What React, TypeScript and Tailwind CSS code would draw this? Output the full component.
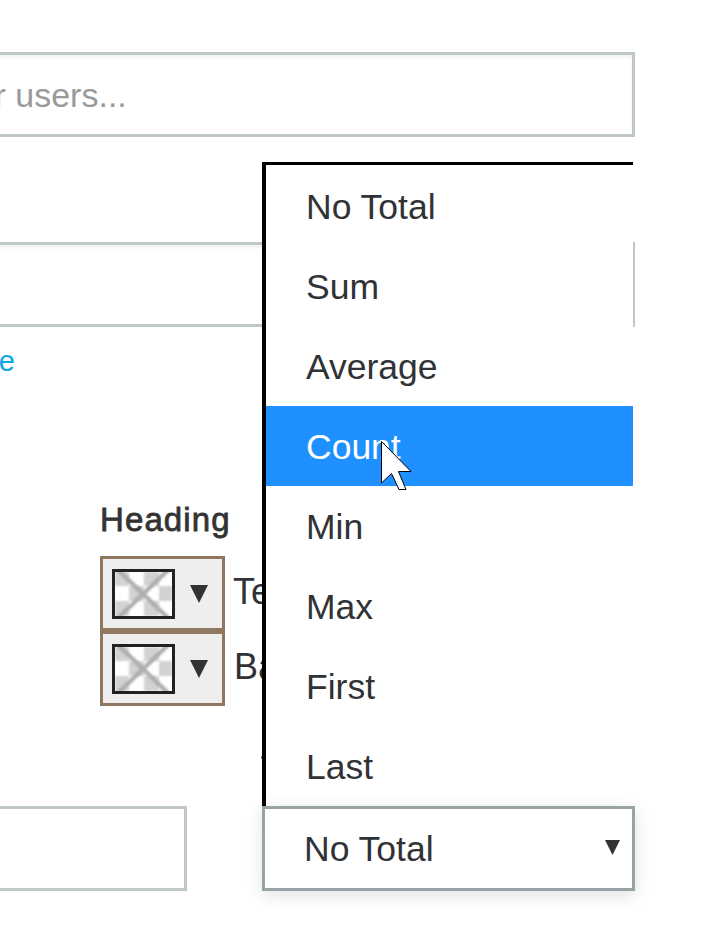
const options = ["No Total", "Sum", "Average", "Count", "Min", "Max", "First", "Last"];

function Swatch() {
  return (
    <svg width="63" height="50" viewBox="0 0 63 50" className="block">
      <rect x="0" y="0" width="63" height="50" fill="#ffffff" />
      <g fill="#d2d2d2" className="blur-[0.8px]">
        <rect x="3" y="3" width="14" height="14" />
        <rect x="32" y="3" width="15" height="14" />
        <rect x="47" y="17" width="13" height="15" />
        <rect x="32" y="32" width="15" height="15" />
        <rect x="3" y="32" width="14" height="15" />
        <rect x="17" y="17" width="15" height="15" />
      </g>
      <g stroke="#adadad" strokeWidth="4.5" fill="none" className="blur-[1px]">
        <path d="M6 1 L56 49" />
        <path d="M56 1 L6 49" />
      </g>
      <rect x="1.5" y="1.5" width="60" height="47" fill="none" stroke="#222222" strokeWidth="3" />
    </svg>
  );
}

function Picker({ label, labelClass }: { label: string; labelClass: string }) {
  return (
    <div className="flex items-center h-[75px]">
      <div className="w-[125px] h-[75px] shrink-0 border-[3px] border-[#8f7760] bg-[#eeeeee] flex items-center pl-[9px]">
        <Swatch />
        <svg width="18" height="18" viewBox="0 0 18 18" className="ml-[15px] mt-[1px]">
          <path d="M0 0 H18 L9 18 Z" fill="#333333" />
        </svg>
      </div>
      <span className={labelClass}>{label}</span>
    </div>
  );
}

export default function App() {
  return (
    <div
      className="relative w-[701px] h-[938px] overflow-hidden bg-white text-[#303236]"
      style={{ fontFamily: '"Liberation Sans", Arial, sans-serif' }}
    >
      <div className="pt-[52px] flex flex-col">
        <div className="ml-[-100px] w-[735px] h-[85px] border-[3px] border-[#bfc8c5] shadow-[inset_0_3px_3px_rgba(0,0,0,0.05)] flex items-center text-[34px] text-[#9a9a9a] whitespace-nowrap">
          <span className="ml-[-54px] mt-[1px]">Search for users...</span>
        </div>
        <div className="mt-[105px] ml-[-100px] w-[735px] h-[85px] border-[3px] border-[#bfc8c5] shadow-[inset_0_3px_3px_rgba(0,0,0,0.05)]" />
        <div className="mt-[20px] h-[30px] w-[15px] flex justify-end items-center text-[29px] text-[#0ea5e9] whitespace-nowrap">
          Manage
        </div>
        <div className="mt-[126px] ml-[100px] h-[34px] text-[33px] leading-[34px] tracking-[1.1px] [-webkit-text-stroke:0.8px_#333333] text-[#333333]">
          Heading
        </div>
        <div className="mt-[19px] ml-[100px] flex flex-col">
          <Picker label="Text" labelClass="ml-[8px] mb-[3px] text-[36px] text-[#303236]" />
          <Picker label="Background" labelClass="ml-[9px] mb-[3px] text-[36px] text-[#303236]" />
        </div>
        <div className="mt-[100px] flex">
          <div className="ml-[-100px] w-[287px] h-[85px] border-[3px] border-[#bfc8c5]" />
          <div className="ml-[75px] w-[373px] h-[85px] border-[3px] border-[#98a3a5] bg-white shadow-[0_4px_16px_rgba(0,0,0,0.12)] relative z-20 flex items-center justify-between pl-[39px] pr-[12px] text-[35.5px]">
            <span className="mt-[2px]">No Total</span>
            <svg width="15" height="15" viewBox="0 0 15 15" className="mb-[3px]">
              <path d="M0 0 H15 L7.5 15 Z" fill="#333333" />
            </svg>
          </div>
        </div>
      </div>

      <div className="absolute left-[261px] top-[756px] w-[2px] h-[3px] bg-[#8a7a6a]" />

      <div className="absolute left-[262px] top-[162px] w-[371px] h-[644px] z-10 bg-white border-t-[3px] border-l-[4px] border-black pt-[1px]">
        {options.map((o) => (
          <div
            key={o}
            className={`h-[80px] flex items-center pl-[40px] text-[35.5px] ${o === "Count" ? "bg-[#1e90ff] text-white" : ""}`}
          >
            <span className="mt-[3px]">{o}</span>
          </div>
        ))}
      </div>

      <svg width="32" height="50" viewBox="0 0 32 50" className="absolute left-[381px] top-[441px] z-30">
        <path d="M0.5 0.5 V42 L10.5 32.5 L18 48.5 H25 L17.5 30.5 H30 Z" fill="#ffffff" stroke="#000000" strokeWidth="1" />
      </svg>
    </div>
  );
}
